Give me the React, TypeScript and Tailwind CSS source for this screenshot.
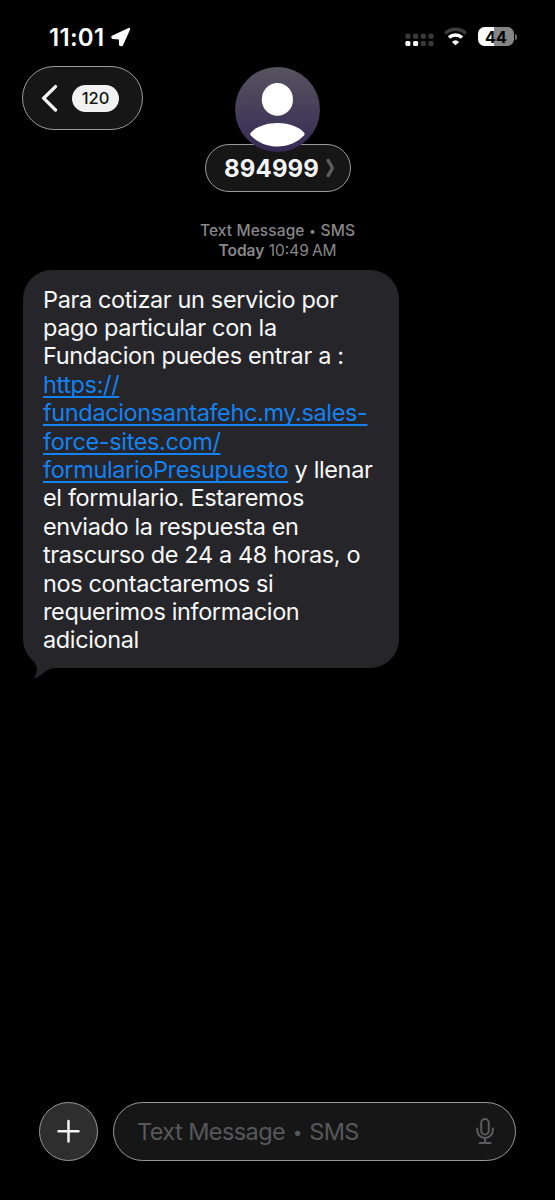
const SignalDots = () => (
    <svg className="mt-[33px] ml-[274px] h-[14px] w-[29px]" viewBox="0 0 29 14">
        {[0, 7.7, 15.4, 23.1].map((x, i) => (
            <g key={x}>
                <rect x={x + 0.4} y="0.8" width="5" height="5" rx="1.5" fill="#3a3a3a" />
                <rect x={x + 0.4} y="8" width="5" height="5" rx="1.5" fill={i < 2 ? "#fff" : "#3a3a3a"} />
            </g>
        ))}
    </svg>
)

const Wifi = () => (
    <svg className="mt-[27px] ml-[9px] h-[19px] w-[25px]" viewBox="0 0 25 19">
        <path d="M2.2 6.4A15 15 0 0 1 22.8 6.4" fill="none" stroke="#3c3c3c" strokeWidth="3.4" />
        <path d="M6 10.6A9.4 9.4 0 0 1 19 10.6" fill="none" stroke="#fff" strokeWidth="3.4" />
        <path d="M12.5 18.3L8.9 14.9Q12.5 11.8 16.1 14.9Z" fill="#fff" />
    </svg>
)

const Battery = () => (
    <div className="mt-[27px] ml-[10px] flex items-center">
        <div className="flex h-[19px] w-[36px] items-center justify-center rounded-[6.5px] bg-[linear-gradient(90deg,#fff_44%,#858585_44%)] text-[16px] font-bold tracking-[0.3px] text-black">
            44
        </div>
        <div className="ml-px h-[6px] w-[2px] rounded-r-full bg-[#6c6c6c]"></div>
    </div>
)

const StatusBar = () => (
    <div className="flex h-[66px] items-start pl-[49px]">
        <div className="mt-[24px] w-[55px] text-[24px] leading-[28px] font-semibold tracking-[0.3px] whitespace-nowrap">11:01</div>
        <svg className="mt-[27px] ml-[7px] h-[20px] w-[20px]" viewBox="0 0 20 20">
            <path d="M1.5 9.8L18 2L10.8 18L9.2 17.8L9 11.2L1.7 10.8Z" fill="#fff" stroke="#fff" strokeWidth="2.4" strokeLinejoin="round" />
        </svg>
        <SignalDots />
        <Wifi />
        <Battery />
    </div>
)

const Header = () => (
    <div className="grid h-[155px] grid-cols-[1fr_146px_1fr] items-start">
        <div className="ml-[22px] flex h-[64px] w-[121px] items-center rounded-full border border-[#9a9a9a] bg-[#161616]">
            <svg className="ml-[18px] h-[28px] w-[17px]" viewBox="0 0 17 28">
                <path d="M14.5 2.6L2.6 14.2L14.5 26" fill="none" stroke="#f5f5f5" strokeWidth="3.3" strokeLinecap="round" strokeLinejoin="round" />
            </svg>
            <div className="ml-[14px] flex h-[27px] w-[47px] items-center justify-center rounded-full bg-[#f2f2f2] pt-px text-[16.5px] font-medium text-[#161616]">
                120
            </div>
        </div>
        <div className="flex flex-col items-center pt-px">
            <svg className="relative z-10 h-[85px] w-[85px]" viewBox="0 0 85 85">
                <defs>
                    <linearGradient id="avatar" x1="0" y1="0" x2="0" y2="1">
                        <stop offset="0" stopColor="#57535f" />
                        <stop offset="1" stopColor="#342b55" />
                    </linearGradient>
                </defs>
                <circle cx="42.5" cy="42.5" r="42.5" fill="url(#avatar)" />
                <ellipse cx="42.4" cy="32.4" rx="15.6" ry="16.4" fill="#fff" />
                <path d="M15.5 66C20 60.5 30 56 42.4 56C55 56 65 60.5 69.3 66Q70 67.3 69 68.5C63 75 53 79.5 42.4 79.5C32 79.5 22 75 15.8 68.5Q14.8 67.3 15.5 66Z" fill="#fff" />
            </svg>
            <div className="-mt-[8px] flex h-[48px] w-[146px] items-center rounded-full border border-[#9a9a9a] bg-[#161616] pl-[18.5px]">
                <span className="w-[96px] pt-px text-[24px] font-bold tracking-[0.15px] whitespace-nowrap text-[#f4f4f4]">894999</span>
                <svg className="ml-[6px] h-[20px] w-[9px]" viewBox="0 0 9 20">
                    <path d="M2.2 2.5C3.4 5 6 8.4 6.3 10C6 11.6 3.4 15 2.2 17.5" fill="none" stroke="#5e5e5e" strokeWidth="3.3" strokeLinecap="round" />
                </svg>
            </div>
        </div>
    </div>
)

const Message = () => (
    <div className="relative mt-[8px] ml-[23px] h-[398px] w-[376px] rounded-[29px] bg-[#26252a] pt-[15.6px] pl-[20px] text-[23.5px] leading-[28.4px] tracking-[-0.37px] whitespace-nowrap text-[#f8f8f8]">
        <p>Para cotizar un servicio por</p>
        <p>pago particular con la</p>
        <p>Fundacion puedes entrar a :</p>
        <div className="text-[#1482f0] underline decoration-[1.5px] underline-offset-[3px] [text-decoration-skip-ink:none]">
            <p>https://</p>
            <p>fundacionsantafehc.my.sales-</p>
            <p>force-sites.com/</p>
        </div>
        <p>
            <span className="text-[#1482f0] underline decoration-[1.5px] underline-offset-[3px] [text-decoration-skip-ink:none]">formularioPresupuesto</span> y llenar
        </p>
        <p>el formulario. Estaremos</p>
        <p>enviado la respuesta en</p>
        <p>trascurso de 24 a 48 horas, o</p>
        <p>nos contactaremos si</p>
        <p>requerimos informacion</p>
        <p>adicional</p>
        <svg className="absolute top-[385px] left-[8px] h-[24px] w-[30px]" viewBox="0 0 30 24">
            <path d="M0 4C5 8 7.5 13 5 19Q4.2 21 3.2 22.2Q3.5 23.3 5.2 22.8C11 20.5 16 13 24 13L24 2Z" fill="#26252a" />
        </svg>
    </div>
)

const Composer = () => (
    <div className="mt-[434px] flex h-[58px] items-center pl-[39px]">
        <div className="flex h-[59px] w-[59px] items-center justify-center rounded-full border border-[#9a9a9a] bg-[#2e2e2e]">
            <svg className="h-[24px] w-[24px]" viewBox="0 0 24 24">
                <path d="M11.5 2V22.5M1.5 12.2H21.5" stroke="#f4f4f4" strokeWidth="2.5" strokeLinecap="round" />
            </svg>
        </div>
        <div className="ml-[15px] flex h-[59px] w-[403px] items-center justify-between rounded-full border border-[#9a9a9a] bg-[#161616] pr-[20px] pl-[23px]">
            <span className="pt-px text-[23.5px] tracking-[-0.58px] whitespace-nowrap text-[#58585c]">
                Text Message<span className="inline-block w-[24px] text-center align-[2px] text-[17px]">•</span>SMS
            </span>
            <svg className="h-[28px] w-[20px]" viewBox="0 0 20 28" fill="none" stroke="#5c5c5e" strokeWidth="2" strokeLinecap="round">
                <rect x="6.2" y="2" width="7.6" height="15.5" rx="3.8" />
                <path d="M2.2 11.5V13.5A7.8 7.5 0 0 0 17.8 13.5V11.5M10 21V26M4.5 26H15.5" />
            </svg>
        </div>
    </div>
)

const App = () => (
    <div className="h-[1200px] w-[555px] overflow-hidden bg-black font-['Inter',sans-serif] text-white">
        <StatusBar />
        <Header />
        <div className="flex h-[41px] flex-col items-center text-[15.5px] leading-[20px] text-[#87878b]">
            <p className="font-medium tracking-[0.1px]">
                Text Message<span className="inline-block w-[16px] text-center align-[1px] text-[12px]">•</span>SMS
            </p>
            <p><span className="font-semibold">Today</span> 10:49<span className="ml-[3px]">AM</span></p>
        </div>
        <Message />
        <Composer />
    </div>
)

export default App;
